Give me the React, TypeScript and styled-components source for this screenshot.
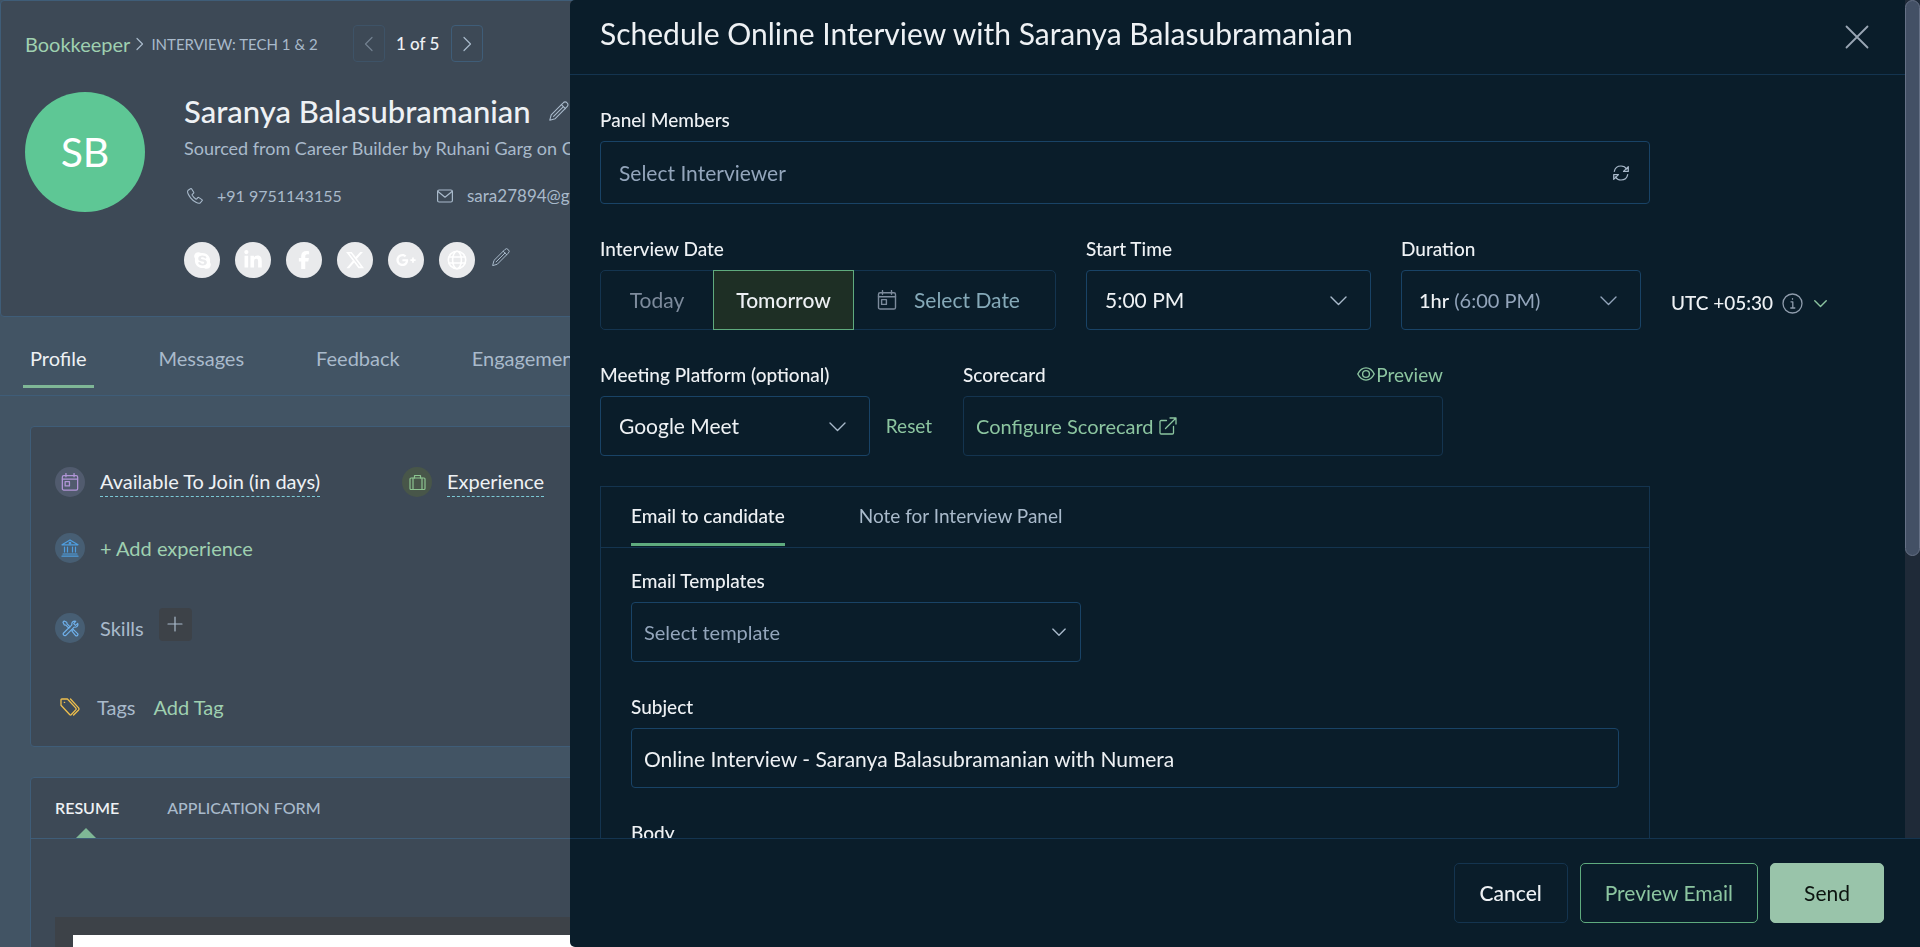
import React from 'react';
import styled, { createGlobalStyle, css } from 'styled-components';
import { FaSkype, FaLinkedinIn, FaFacebookF, FaXTwitter, FaGooglePlusG } from 'react-icons/fa6';

const c = {
  page: '#425464',
  card: '#3d4956',
  cardLine: '#3f5d78',
  panel: '#0a1d2a',
  line: '#14344f',
  field: '#194366',
  white: '#eef1f4',
  muted: '#a9bacb',
  placeholder: '#93a5bb',
  icon: '#8f9cac',
  green: '#8cc5a0',
  greenLine: '#5fab7e',
  paleGreen: '#9fd0b0',
};

const GlobalStyle = createGlobalStyle`
  *, *::before, *::after { box-sizing: border-box; }
  body {
    margin: 0;
    background: ${c.page};
    color: ${c.white};
    font-family: Lato, "Liberation Sans", sans-serif;
    font-size: 19px;
    line-height: 24px;
    overflow: hidden;
  }
  h1, h2, p { margin: 0; font-weight: 400; }
  button, input, select, textarea { font: inherit; color: inherit; }
  button { padding: 0; border: 0; background: none; cursor: pointer; }
  a { color: ${c.green}; text-decoration: none; }
`;

/* ---------- icons ---------- */

const Svg = styled.svg`
  flex: none;
  display: block;
  fill: none;
  stroke: currentColor;
  stroke-linecap: round;
  stroke-linejoin: round;
`;

type IconProps = { size?: number };

const Chevron = ({ size = 17 }: IconProps) => (
  <Svg width={size} height={size} viewBox="0 0 17 17" strokeWidth="1.4" aria-hidden="true">
    <path vectorEffect="non-scaling-stroke" d="M1 5l7.500 7.500L16 5" />
  </Svg>
);

const SideChevron = ({ left }: { left?: boolean }) => (
  <Svg width="16" height="16" viewBox="0 0 16 16" strokeWidth="1.200" aria-hidden="true">
    <path d={left ? 'M11 1.500L4.500 8l6.500 6.500' : 'M5 1.500L11.500 8 5 14.500'} />
  </Svg>
);

const CrumbChevron = () => (
  <Svg width="8" height="14" viewBox="0 0 8 14" strokeWidth="1.200" aria-hidden="true">
    <path d="M1 1.500L6.500 7 1 12.500" />
  </Svg>
);

const Pencil = ({ size = 20 }: IconProps) => (
  <Svg width={size} height={size} viewBox="0 0 20 20" strokeWidth="1.100" aria-hidden="true">
    <path d="M.8 19.200l1.400-5.400L14.200 1.800a2.600 2.600 0 013.900 0 2.600 2.600 0 010 3.900L6.200 17.700z" />
    <path d="M12.400 3.600l4 4M4.600 15.400l9.800-9.800" />
  </Svg>
);

const Phone = () => (
  <Svg width="16" height="16" viewBox="0 0 16 16" strokeWidth="1.100" aria-hidden="true">
    <path d="M3.400.8L1.200 2.200C.2 3.200.6 6 3.600 9.800c3.400 4.200 7.600 6.200 9.600 5.200l1.900-2.300c.3-.4.200-.8-.2-1.100L12 9.600c-.4-.3-.9-.2-1.200.1l-1 1.200c-.3.3-.7.300-1 .1C7.200 9.900 6 8.500 5.200 7.200c-.2-.4-.1-.7.200-1l1-.8c.4-.3.500-.8.300-1.200L4.700 1C4.400.6 3.800.5 3.400.8z" />
  </Svg>
);

const Mail = () => (
  <Svg width="16" height="14" viewBox="0 0 16 14" strokeWidth="1.200" aria-hidden="true">
    <rect x=".6" y="1" width="14.800" height="12" rx="1.500" />
    <path d="M1 2.500l7 5.700 7-5.700" />
  </Svg>
);

const Globe = () => (
  <Svg width="20" height="20" viewBox="0 0 20 20" strokeWidth="1.600" aria-hidden="true">
    <circle cx="10" cy="10" r="8.700" />
    <ellipse cx="10" cy="10" rx="4.400" ry="8.700" />
    <path d="M2 7h16M2 13h16" />
  </Svg>
);

const Calendar = ({ size = 20 }: IconProps) => (
  <Svg width={size} height={size} viewBox="0 0 20 20" strokeWidth="1.400" aria-hidden="true">
    <rect x="1.500" y="2.800" width="17" height="16.200" rx="1.600" />
    <path d="M1.500 6.800h17M5.500.6v3.600M14.500.6v3.600" />
    <rect x="4.600" y="9.600" width="4.800" height="4.800" />
  </Svg>
);

const Briefcase = () => (
  <Svg width="17" height="17" viewBox="0 0 17 17" strokeWidth="1.200" aria-hidden="true">
    <rect x="1" y="4" width="15" height="11.500" rx="1" />
    <path d="M5.500 4V1.500h6V4M4 4v11.500M13 4v11.500" />
  </Svg>
);

const Bank = () => (
  <Svg width="18" height="18" viewBox="0 0 18 18" strokeWidth="1.200" aria-hidden="true">
    <path d="M1 5.800L9 1l8 4.800zM1 17.200h16M2 15h14M3.500 8v5M6.500 8v5M11.500 8v5M14.500 8v5" />
    <circle cx="9" cy="4.200" r=".8" />
  </Svg>
);

const Tools = () => (
  <Svg width="17" height="17" viewBox="0 0 17 17" strokeWidth="1.200" aria-hidden="true">
    <path d="M1 2.200L2.200 1l2.500 1.300.4 1.600 3 3-1.300 1.300-3-3-1.600-.4z" />
    <path d="M9.800 10.800l1.400-1.400 4.400 4.200c1 1.300-.8 3-2 2z" />
    <path d="M15.700 3.400l-2.200 2-1.800-1.800 2-2.300c-2-.8-4.500 1-3.800 3.600L1.600 13c-1.200 1.400.7 3.500 2.300 2.300l8.200-8.200c2.500.7 4.400-1.500 3.600-3.700z" />
  </Svg>
);

const Tags = () => (
  <Svg width="20" height="18" viewBox="0 0 20 18" strokeWidth="1.300" aria-hidden="true">
    <path d="M1 1.800v5.400l8.600 9.300c.6.600 1.200.6 1.800 0l4.300-4.600c.6-.7.600-1.300 0-2L7.400 1H1.800C1.300 1 1 1.300 1 1.800z" />
    <path d="M10.500 1l7.900 8.600c.8.900.8 1.700 0 2.600L13.600 17M4.300 4.300h.4" />
  </Svg>
);

const Plus = () => (
  <Svg width="16" height="16" viewBox="0 0 16 16" strokeWidth="1.200" aria-hidden="true">
    <path d="M8 1v14M1 8h14" />
  </Svg>
);

const Close = () => (
  <Svg width="24" height="24" viewBox="0 0 24 24" strokeWidth="1.800" aria-hidden="true">
    <path d="M1.500 1.500l21 21M22.500 1.500l-21 21" />
  </Svg>
);

const Refresh = () => (
  <Svg width="16" height="16" viewBox="0 0 16 16" strokeWidth="1.200" aria-hidden="true">
    <path d="M1.300 6.400C2 3 4.800 1 8 1c2.600 0 4.500 1.200 5.800 3.200M14.700 9.600C14 13 11.200 15 8 15c-2.600 0-4.500-1.200-5.800-3.200" />
    <path d="M15.300 1.600v4.800h-4.800zM.7 14.400V9.600h4.800z" />
  </Svg>
);

const Info = () => (
  <Svg width="21" height="21" viewBox="0 0 21 21" strokeWidth="1.300" aria-hidden="true">
    <circle cx="10.500" cy="10.500" r="9.500" />
    <path d="M9 8.800h1.800v6M8.800 15h4M10.500 5.600v.6" />
  </Svg>
);

const Eye = () => (
  <Svg width="18" height="16" viewBox="0 0 18 16" strokeWidth="1.400" aria-hidden="true">
    <path d="M.8 7C2.800 3 5.800.9 9 .9S15.200 3 17.200 7c-2 4-5 6.100-8.200 6.100S2.800 11 .8 7z" />
    <circle cx="9" cy="7" r="3.400" />
  </Svg>
);

const External = () => (
  <Svg width="18" height="18" viewBox="0 0 18 18" strokeWidth="1.300" aria-hidden="true">
    <path d="M7.500 3.500H2.200c-.7 0-1.200.5-1.200 1.200v11.100c0 .7.500 1.200 1.200 1.200h11.100c.7 0 1.200-.5 1.200-1.200v-6.300M6.500 11.500L17 1M11 1h6v6" />
  </Svg>
);

/* ---------- candidate page ---------- */

const Page = styled.main`
  height: 100vh;
  overflow: hidden;
  background: ${c.page};
`;

const Header = styled.header`
  padding: 24px 24px 38px;
  background: ${c.card};
  border: 1px solid ${c.cardLine};
  border-radius: 4px;
`;

const Breadcrumb = styled.nav`
  display: flex;
  align-items: center;
  height: 37px;
  margin-bottom: 30px;
  color: ${c.muted};

  a { margin-right: 6px; font-size: 20px; color: ${c.paleGreen}; }
`;

const Stage = styled.span`
  margin: 0 35px 0 7px;
  font-size: 15px;
`;

const PageButton = styled.button`
  display: grid;
  place-items: center;
  width: 32px;
  height: 37px;
  border: 1px solid ${c.cardLine};
  border-radius: 4px;
  color: ${c.muted};

  &:disabled { opacity: 0.5; cursor: default; }
`;

const PageCount = styled.span`
  width: 66px;
  text-align: center;
  font-size: 17px;
  font-weight: 500;
  color: ${c.white};
`;

const Identity = styled.div`
  display: flex;
  gap: 39px;
`;

const Avatar = styled.div`
  display: grid;
  place-items: center;
  flex: none;
  width: 120px;
  height: 120px;
  border-radius: 50%;
  background: #5ec795;
  color: #fff;
  font-size: 41px;
`;

const NameRow = styled.div`
  display: flex;
  align-items: center;
  gap: 18px;
  color: ${c.muted};

  h1 {
    font-size: 31px;
    font-weight: 500;
    line-height: 38px;
    color: ${c.white};
  }
`;

const Source = styled.p`
  margin-top: 6px;
  font-size: 18px;
  white-space: nowrap;
  color: ${c.muted};
`;

const Contacts = styled.div`
  display: grid;
  grid-template-columns: 250px 250px;
  margin-top: 24px;
  padding-left: 3px;
`;

const Contact = styled.div<{ $size: number }>`
  display: flex;
  align-items: center;
  gap: 14px;
  font-size: ${p => p.$size}px;
  color: ${c.muted};
`;

const Socials = styled.div`
  display: flex;
  align-items: center;
  gap: 15px;
  margin-top: 34px;
  color: ${c.muted};

  button { margin: 0 0 6px 2px; }
`;

const Social = styled.a`
  display: grid;
  place-items: center;
  width: 36px;
  height: 36px;
  border-radius: 50%;
  background: #e9eaec;
  color: #fff;
`;

const Tabs = styled.nav`
  display: flex;
  gap: 58px;
  padding: 9px 23px 7px;
  border-bottom: 1px solid ${c.cardLine};
`;

const Tab = styled.a<{ $active?: boolean }>`
  flex: none;
  padding: 2px 7px 0;
  border: solid transparent;
  border-width: 3px 0;
  line-height: 54px;
  font-size: 20px;
  color: ${c.muted};
  ${p => p.$active && css`
    color: ${c.white};
    border-bottom-color: #7fb796;
  `}
`;

const Card = styled.section`
  margin: 30px;
  background: ${c.card};
  border: 1px solid ${c.cardLine};
  border-radius: 4px;
`;

const Facts = styled.div`
  display: grid;
  grid-template-columns: 347px 1fr;
  padding: 40px 24px 24px;
`;

const Fact = styled.div<{ $gap?: number; $wide?: boolean }>`
  display: flex;
  align-items: center;
  height: 30px;
  margin-top: ${p => p.$gap ?? 0}px;
  gap: 15px;
  font-size: 20px;
  color: ${c.muted};
  ${p => p.$wide && css`grid-column: 1 / -1;`}

  a { color: ${c.paleGreen}; }
`;

const TagFact = styled(Fact)`
  gap: 12px;

  a { margin-left: 6px; }
`;

const Bubble = styled.span<{ $bg: string; $fg: string }>`
  display: grid;
  place-items: center;
  flex: none;
  width: 30px;
  height: 30px;
  border-radius: 50%;
  background: ${p => p.$bg};
  color: ${p => p.$fg};
`;

const Term = styled.span`
  padding-bottom: 1px;
  border-bottom: 1px dashed #7cc9d6;
  line-height: 28px;
  color: ${c.white};
`;

const AddButton = styled.button`
  display: grid;
  place-items: center;
  width: 33px;
  height: 33px;
  margin-bottom: 8px;
  border-radius: 4px;
  background: #3d4248;
  color: ${c.muted};
`;

const DocTabs = styled.nav`
  display: flex;
  gap: 48px;
  padding: 0 24px;
  border-bottom: 1px solid ${c.cardLine};
`;

const DocTab = styled.a<{ $active?: boolean }>`
  position: relative;
  line-height: 60px;
  font-size: 16px;
  font-weight: 500;
  color: ${c.muted};
  ${p => p.$active && css`
    font-weight: 600;
    color: ${c.white};

    &::after {
      content: '';
      position: absolute;
      left: calc(50% - 11px);
      bottom: 0;
      border: solid transparent;
      border-width: 0 10px 10px;
      border-bottom-color: #7fb796;
    }
  `}
`;

const Viewer = styled.div`
  margin: 78px 24px 24px;
  padding: 18px;
  background: #3d4248;
`;

const Sheet = styled.div`
  height: 1000px;
  background: #fff;
`;

/* ---------- drawer ---------- */

const Drawer = styled.aside`
  position: fixed;
  inset: 0 0 0 570px;
  display: flex;
  flex-direction: column;
  overflow: hidden;
  border-radius: 5px 0 0 5px;
  background: ${c.panel};
`;

const Scroller = styled.div`
  display: flex;
  flex: 1;
  min-height: 0;
`;

const Content = styled.div`
  flex: 1;
  min-width: 0;
  overflow: hidden;
`;

const Track = styled.div`
  flex: none;
  width: 15px;
  background: #1f2a38;
`;

const Thumb = styled.div`
  height: 66.3%;
  border: 1px solid #667186;
  border-radius: 8px;
  background: #435065;
`;

const DrawerHead = styled.div`
  display: flex;
  align-items: flex-start;
  justify-content: space-between;
  height: 75px;
  padding: 14px 36px 0 30px;
  border-bottom: 1px solid ${c.line};

  h2 { font-size: 30px; line-height: 38px; }
  button { padding-top: 11px; color: #9aa6b4; }
`;

const Form = styled.form`
  display: flex;
  flex-direction: column;
  padding: 33px 30px 0;
`;

const Row = styled.div`
  display: flex;
  align-items: flex-end;
  gap: 30px;
  margin-top: 33px;
`;

const Field = styled.div<{ $w?: number }>`
  display: flex;
  flex-direction: column;
  gap: 9px;
  ${p => p.$w && css`width: ${p.$w}px;`}
`;

const labelText = css`
  font-size: 19px;
  font-weight: 500;
  line-height: 24px;
  color: ${c.white};
`;

const Label = styled.label`${labelText}`;
const Caption = styled.span`${labelText}`;

const box = css`
  height: 60px;
  border: 1px solid ${c.field};
  border-radius: 4px;
  background: transparent;
`;

const SearchBox = styled.div`
  ${box}
  display: flex;
  align-items: center;
  height: 63px;
  padding: 0 20px 0 18px;
  color: ${c.muted};

  input {
    flex: 1;
    min-width: 0;
    padding: 0;
    border: 0;
    outline: 0;
    background: none;
    font-size: 21px;
  }
  input::placeholder { color: ${c.placeholder}; opacity: 1; }
`;

const Segments = styled.div`
  display: flex;
  height: 60px;
  border: 1px solid ${c.line};
  border-radius: 5px;
`;

const Segment = styled.button<{ $w: number; $active?: boolean }>`
  display: flex;
  align-items: center;
  justify-content: center;
  gap: 17px;
  width: ${p => p.$w}px;
  margin: -1px 0;
  font-size: 21px;
  color: #7d8b9c;
  ${p => p.$active && css`
    border: 1px solid ${c.greenLine};
    background: #1e2f25;
    font-weight: 500;
    color: ${c.white};
  `}
`;

const DateSegment = styled(Segment)`
  justify-content: flex-start;
  padding-left: 23px;

  span { color: #85a9b8; }
`;

const SelectBox = styled.div<{ $inset?: number }>`
  ${box}
  display: grid;
  align-items: center;
  color: ${c.muted};

  select, svg { grid-area: 1 / 1; }
  select {
    width: 100%;
    height: 58px;
    padding: 0 50px 0 ${p => p.$inset ?? 18}px;
    border: 0;
    outline: 0;
    appearance: none;
    background: none;
    font-size: 21px;
    color: ${c.white};
  }
  svg {
    justify-self: end;
    margin-right: 23px;
    pointer-events: none;
  }
`;

const TemplateBox = styled(SelectBox)`
  select { font-size: 20px; color: ${c.placeholder}; }
  svg { margin-right: 14px; }
`;

const MenuButton = styled.button`
  ${box}
  display: flex;
  align-items: center;
  justify-content: space-between;
  padding: 0 23px 0 17px;
  font-size: 20px;
  color: ${c.placeholder};

  b { font-weight: 500; color: ${c.white}; }
`;

const Zone = styled.div`
  display: flex;
  align-items: center;
  gap: 9px;
  height: 54px;
  font-weight: 500;
  color: ${c.white};

  > svg { color: ${c.icon}; }
  button { color: ${c.green}; padding-left: 2px; }
`;

const Platform = styled.div`
  display: grid;
  grid-template-columns: 270px 48px;
  align-items: center;
  gap: 15px;
`;

const LinkButton = styled.button`
  color: ${c.green};
`;

const CaptionRow = styled.div`
  display: flex;
  align-items: center;
  justify-content: space-between;

  a { display: flex; align-items: center; gap: 1px; }
`;

const LinkBox = styled.div`
  ${box}
  display: flex;
  align-items: center;
  padding: 0 12px;
  border-color: ${c.line};

  a { display: flex; align-items: center; gap: 5px; font-size: 20px; }
`;

const EmailPanel = styled.div`
  width: 1050px;
  max-width: 100%;
  margin-top: 30px;
  border: 1px solid ${c.line};
`;

const PanelTabs = styled.div`
  display: flex;
  gap: 74px;
  padding: 0 30px 1px;
  border-bottom: 1px solid ${c.line};
`;

const PanelTab = styled.button<{ $active?: boolean }>`
  height: 59px;
  padding-top: 2px;
  border: solid transparent;
  border-width: 0 0 3px;
  color: ${c.muted};
  ${p => p.$active && css`
    font-weight: 500;
    color: ${c.white};
    border-bottom-color: ${c.greenLine};
  `}
`;

const PanelBody = styled.div`
  display: flex;
  flex-direction: column;
  gap: 33px;
  padding: 21px 30px 30px;
`;

const TextInput = styled.input`
  ${box}
  width: 100%;
  padding: 0 12px;
  outline: 0;
  font-size: 21px;
`;

const TextArea = styled.textarea`
  ${box}
  height: 300px;
  resize: none;
`;

const Footer = styled.footer`
  display: flex;
  justify-content: flex-end;
  gap: 12px;
  padding: 24px 36px;
  border-top: 1px solid ${c.line};
`;

const Action = styled.button<{ $kind?: 'outline' | 'solid' }>`
  height: 60px;
  min-width: 114px;
  padding: 0 24px;
  border: 1px solid ${c.line};
  border-radius: 5px;
  font-size: 21px;
  font-weight: 500;
  ${p => p.$kind === 'outline' && css`
    border-color: ${c.greenLine};
    font-weight: 400;
    color: ${c.green};
  `}
  ${p => p.$kind === 'solid' && css`
    border-color: #99c4aa;
    background: #99c4aa;
    font-weight: 400;
    color: #0c1410;
  `}
`;

const socials = [
  { name: 'Skype', icon: <FaSkype size={19} /> },
  { name: 'LinkedIn', icon: <FaLinkedinIn size={20} /> },
  { name: 'Facebook', icon: <FaFacebookF size={18} /> },
  { name: 'X', icon: <FaXTwitter size={20} /> },
  { name: 'Google Plus', icon: <FaGooglePlusG size={20} /> },
  { name: 'Website', icon: <Globe /> },
];

function Candidate() {
  return (
    <Page>
      <Header>
        <Breadcrumb aria-label="Breadcrumb">
          <a href="#job">Bookkeeper</a>
          <CrumbChevron />
          <Stage>INTERVIEW: TECH 1 &amp; 2</Stage>
          <PageButton disabled aria-label="Previous candidate"><SideChevron left /></PageButton>
          <PageCount>1 of 5</PageCount>
          <PageButton aria-label="Next candidate"><SideChevron /></PageButton>
        </Breadcrumb>
        <Identity>
          <Avatar>SB</Avatar>
          <div>
            <NameRow>
              <h1>Saranya Balasubramanian</h1>
              <button aria-label="Edit name"><Pencil /></button>
            </NameRow>
            <Source>Sourced from Career Builder by Ruhani Garg on Oct</Source>
            <Contacts>
              <Contact $size={16}><Phone />+91 9751143155</Contact>
              <Contact $size={17}><Mail />sara27894@gmail.com</Contact>
            </Contacts>
            <Socials>
              {socials.map(s => (
                <Social key={s.name} href={'#' + s.name} aria-label={s.name}>{s.icon}</Social>
              ))}
              <button aria-label="Edit social links"><Pencil size={18} /></button>
            </Socials>
          </div>
        </Identity>
      </Header>

      <Tabs>
        <Tab $active href="#profile">Profile</Tab>
        <Tab href="#messages">Messages</Tab>
        <Tab href="#feedback">Feedback</Tab>
        <Tab href="#engagement">Engagement</Tab>
      </Tabs>

      <Card>
        <Facts>
          <Fact>
            <Bubble $bg="#515b6e" $fg="#b296d8"><Calendar size={18} /></Bubble>
            <Term>Available To Join (in days)</Term>
          </Fact>
          <Fact>
            <Bubble $bg="#485649" $fg="#8cc48f"><Briefcase /></Bubble>
            <Term>Experience</Term>
          </Fact>
          <Fact $gap={36} $wide>
            <Bubble $bg="#475e73" $fg="#4f9ee0"><Bank /></Bubble>
            <a href="#experience">+ Add experience</a>
          </Fact>
          <Fact $gap={50} $wide>
            <Bubble $bg="#475e73" $fg="#6fb0ea"><Tools /></Bubble>
            Skills
            <AddButton aria-label="Add skill"><Plus /></AddButton>
          </Fact>
          <TagFact $gap={49} $wide>
            <Bubble $bg="transparent" $fg="#eebf4d"><Tags /></Bubble>
            Tags
            <a href="#tag">Add Tag</a>
          </TagFact>
        </Facts>
      </Card>

      <Card>
        <DocTabs>
          <DocTab $active href="#resume">RESUME</DocTab>
          <DocTab href="#application">APPLICATION FORM</DocTab>
        </DocTabs>
        <Viewer><Sheet /></Viewer>
      </Card>
    </Page>
  );
}

function ScheduleDrawer() {
  return (
    <Drawer role="dialog" aria-labelledby="drawer-title">
      <Scroller>
        <Content>
          <DrawerHead>
            <h2 id="drawer-title">Schedule Online Interview with Saranya Balasubramanian</h2>
            <button aria-label="Close"><Close /></button>
          </DrawerHead>
          <Form onSubmit={e => e.preventDefault()}>
            <Field $w={1050}>
              <Label htmlFor="panel">Panel Members</Label>
              <SearchBox>
                <input id="panel" type="text" placeholder="Select Interviewer" />
                <button type="button" aria-label="Refresh"><Refresh /></button>
              </SearchBox>
            </Field>

            <Row>
              <Field $w={456}>
                <Caption>Interview Date</Caption>
                <Segments>
                  <Segment type="button" $w={112}>Today</Segment>
                  <Segment type="button" $w={141} $active>Tomorrow</Segment>
                  <DateSegment type="button" $w={201}><Calendar size={20} /><span>Select Date</span></DateSegment>
                </Segments>
              </Field>
              <Field $w={285}>
                <Label htmlFor="start">Start Time</Label>
                <SelectBox>
                  <select id="start"><option>5:00 PM</option></select>
                  <Chevron />
                </SelectBox>
              </Field>
              <Field $w={240}>
                <Label htmlFor="duration">Duration</Label>
                <MenuButton id="duration" type="button" aria-haspopup="listbox">
                  <span><b>1hr</b> (6:00 PM)</span>
                  <Chevron />
                </MenuButton>
              </Field>
              <Zone>
                UTC +05:30
                <Info />
                <button type="button" aria-label="Change time zone"><Chevron size={13} /></button>
              </Zone>
            </Row>

            <Row>
              <Field $w={333}>
                <Label htmlFor="platform">Meeting Platform (optional)</Label>
                <Platform>
                  <SelectBox>
                    <select id="platform"><option>Google Meet</option></select>
                    <Chevron />
                  </SelectBox>
                  <LinkButton type="button">Reset</LinkButton>
                </Platform>
              </Field>
              <Field $w={480}>
                <CaptionRow>
                  <Caption>Scorecard</Caption>
                  <a href="#preview"><Eye />Preview</a>
                </CaptionRow>
                <LinkBox>
                  <a href="#scorecard">Configure Scorecard<External /></a>
                </LinkBox>
              </Field>
            </Row>

            <EmailPanel>
              <PanelTabs role="tablist">
                <PanelTab type="button" role="tab" aria-selected $active>Email to candidate</PanelTab>
                <PanelTab type="button" role="tab">Note for Interview Panel</PanelTab>
              </PanelTabs>
              <PanelBody>
                <Field $w={450}>
                  <Label htmlFor="template">Email Templates</Label>
                  <TemplateBox $inset={12}>
                    <select id="template"><option>Select template</option></select>
                    <Chevron size={14} />
                  </TemplateBox>
                </Field>
                <Field>
                  <Label htmlFor="subject">Subject</Label>
                  <TextInput id="subject" type="text" defaultValue="Online Interview - Saranya Balasubramanian with Numera" />
                </Field>
                <Field>
                  <Label htmlFor="body">Body</Label>
                  <TextArea id="body" />
                </Field>
              </PanelBody>
            </EmailPanel>
          </Form>
        </Content>
        <Track><Thumb /></Track>
      </Scroller>
      <Footer>
        <Action type="button">Cancel</Action>
        <Action type="button" $kind="outline">Preview Email</Action>
        <Action type="button" $kind="solid">Send</Action>
      </Footer>
    </Drawer>
  );
}

export default function App() {
  return (
    <>
      <GlobalStyle />
      <Candidate />
      <ScheduleDrawer />
    </>
  );
}
